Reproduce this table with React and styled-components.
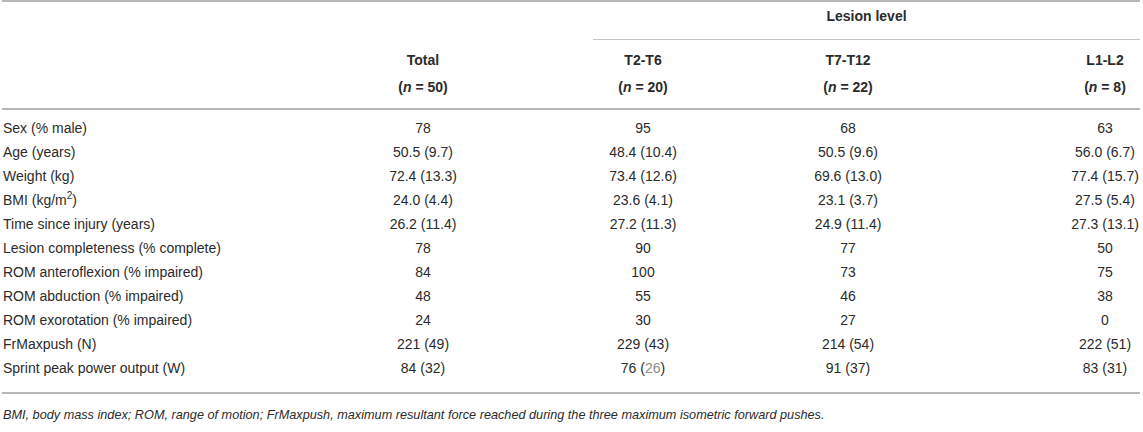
import React from "react";
import styled, { createGlobalStyle } from "styled-components";

const GlobalStyle = createGlobalStyle`
  body {
    margin: 0;
    background: #fff;
    font-family: "Liberation Sans", Arial, sans-serif;
    color: #2b2b2b;
  }
`;

const columns = [
  { key: "total", label: "Total", n: 50 },
  { key: "t2", label: "T2-T6", n: 20 },
  { key: "t7", label: "T7-T12", n: 22 },
  { key: "l1", label: "L1-L2", n: 8, offset: 127 },
];

const rows = [
  { label: "Sex (% male)", values: ["78", "95", "68", "63"] },
  { label: "Age (years)", values: ["50.5 (9.7)", "48.4 (10.4)", "50.5 (9.6)", "56.0 (6.7)"] },
  { label: "Weight (kg)", values: ["72.4 (13.3)", "73.4 (12.6)", "69.6 (13.0)", "77.4 (15.7)"] },
  { label: "BMI (kg/m", sup: "2", after: ")", values: ["24.0 (4.4)", "23.6 (4.1)", "23.1 (3.7)", "27.5 (5.4)"] },
  { label: "Time since injury (years)", values: ["26.2 (11.4)", "27.2 (11.3)", "24.9 (11.4)", "27.3 (13.1)"] },
  { label: "Lesion completeness (% complete)", values: ["78", "90", "77", "50"] },
  { label: "ROM anteroflexion (% impaired)", values: ["84", "100", "73", "75"] },
  { label: "ROM abduction (% impaired)", values: ["48", "55", "46", "38"] },
  { label: "ROM exorotation (% impaired)", values: ["24", "30", "27", "0"] },
  { label: "FrMaxpush (N)", values: ["221 (49)", "229 (43)", "214 (54)", "222 (51)"] },
  { label: "Sprint peak power output (W)", values: ["84 (32)", ["76 (", "26", ")"], "91 (37)", "83 (31)"] },
];

const Wrapper = styled.div`
  width: 1138px;
  margin-left: 2px;
  font-size: 14px;
`;

const Grid = styled.div`
  display: grid;
  grid-template-columns: 311px 220px 220px 190px 197px;
`;

const Head = styled(Grid)`
  border-top: 2px solid #b7b7b7;
  border-bottom: 2px solid #b7b7b7;
`;

const SpanHead = styled.div`
  grid-column: 3 / 6;
  margin-left: 60px;
  padding: 2px 0 10px;
  line-height: 25px;
  font-weight: bold;
  text-align: center;
  border-bottom: 1px solid #c4c4c4;
`;

const HeadCell = styled.div`
  grid-row: 2;
  padding: 7px 0 7px ${({ $offset }) => $offset || 0}px;
  line-height: 27px;
  font-weight: bold;
  text-align: center;
  display: flex;
  flex-direction: column;
`;

const Body = styled(Grid)`
  padding: 6px 0 12px;
  border-bottom: 2px solid #b7b7b7;
`;

const Label = styled.div`
  line-height: 24px;
  padding-left: 1px;
  white-space: nowrap;
  sup {
    font-size: 10px;
    line-height: 0;
  }
`;

const Cell = styled.div`
  line-height: 24px;
  text-align: center;
  white-space: nowrap;
  padding-left: ${({ $offset }) => $offset || 0}px;
`;

const Faint = styled.span`
  color: #8c8c8c;
`;

const Note = styled.p`
  margin: 9px 0 0 1px;
  font-style: italic;
  line-height: 24px;
  font-size: 12.7px;
`;

const Value = ({ v }) =>
  Array.isArray(v) ? (
    <>
      {v[0]}
      <Faint>{v[1]}</Faint>
      {v[2]}
    </>
  ) : (
    v
  );

export default function App() {
  return (
    <Wrapper>
      <GlobalStyle />
      <Head>
        <SpanHead>Lesion level</SpanHead>
        <div style={{ gridRow: 2 }} />
        {columns.map((c) => (
          <HeadCell key={c.key} $offset={c.offset}>
            <span>{c.label}</span>
            <span>
              (<i>n</i> = {c.n})
            </span>
          </HeadCell>
        ))}
      </Head>
      <Body>
        {rows.map((r) => (
          <React.Fragment key={r.label}>
            <Label>
              {r.label}
              {r.sup && <sup>{r.sup}</sup>}
              {r.after}
            </Label>
            {r.values.map((v, i) => (
              <Cell key={i} $offset={columns[i].offset}>
                <Value v={v} />
              </Cell>
            ))}
          </React.Fragment>
        ))}
      </Body>
      <Note>
        BMI, body mass index; ROM, range of motion; FrMaxpush, maximum resultant force reached during the
        three maximum isometric forward pushes.
      </Note>
    </Wrapper>
  );
}
